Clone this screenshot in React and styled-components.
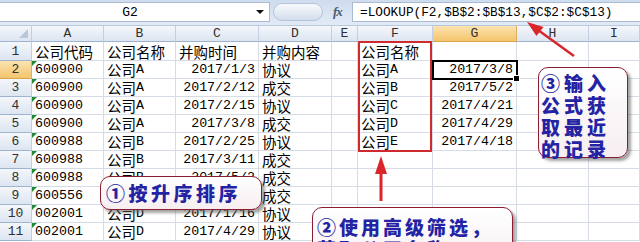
import React from "react";
import styled, { createGlobalStyle } from "styled-components";

const GlobalStyle = createGlobalStyle`
  html, body {
    margin: 0;
    padding: 0;
    background: #ffffff;
    overflow: hidden;
  }
  #root {
    width: 640px;
    height: 242px;
  }
`;

const COLS = [32, 72, 72, 83, 73, 26, 75, 84, 72, 51];
const LETTERS = ["", "A", "B", "C", "D", "E", "F", "G", "H", "I"];
const ALIGN = ["c", "l", "l", "r", "l", "l", "l", "r", "l", "l"];

const ROWS = [
  ["公司代码", "公司名称", "并购时间", "并购内容", "", "公司名称", "", "", ""],
  ["600900", "公司A", "2017/1/3", "协议", "", "公司A", "2017/3/8", "", ""],
  ["600900", "公司A", "2017/2/12", "成交", "", "公司B", "2017/5/2", "", ""],
  ["600900", "公司A", "2017/2/15", "协议", "", "公司C", "2017/4/21", "", ""],
  ["600900", "公司A", "2017/3/8", "成交", "", "公司D", "2017/4/29", "", ""],
  ["600988", "公司B", "2017/2/25", "协议", "", "公司E", "2017/4/18", "", ""],
  ["600988", "公司B", "2017/3/11", "成交", "", "", "", "", ""],
  ["600988", "公司B", "2017/5/2", "成交", "", "", "", "", ""],
  ["600556", "公司C", "2017/4/21", "成交", "", "", "", "", ""],
  ["002001", "公司D", "2017/1/16", "协议", "", "", "", "", ""],
  ["002001", "公司D", "2017/4/29", "协议", "", "", "", "", ""],
];

const Sheet = styled.div`
  position: relative;
  width: 640px;
  height: 242px;
  overflow: hidden;
  font-family: "Liberation Mono", "Noto Sans CJK SC", monospace;
  color: #000;
`;

const FormulaBar = styled.div`
  display: flex;
  height: 26px;
  box-sizing: border-box;
  padding: 2px 0 3px 0;
  background: linear-gradient(#cfdcee, #e2eaf6);
  border-bottom: 1px solid #b7c7dc;
`;

const NameBox = styled.div`
  flex: 0 0 270px;
  display: flex;
  align-items: center;
  background: #fff;
  border: 1px solid #a9bcd4;
  border-left: none;
  box-sizing: border-box;
  font-size: 13px;
`;

const NameText = styled.span`
  flex: 1;
  text-align: center;
  padding-left: 4px;
`;

const Caret = styled.span`
  width: 0;
  height: 0;
  margin-right: 5px;
  border-left: 4px solid transparent;
  border-right: 4px solid transparent;
  border-top: 4px solid #111;
`;

const ToolZone = styled.div`
  flex: 0 0 82px;
  display: flex;
  align-items: center;
  padding-left: 3px;
  box-sizing: border-box;
`;

const Pill = styled.div`
  width: 50px;
  height: 18px;
  border-radius: 9px;
  background: linear-gradient(#f7f9fc, #d3deeb);
  border: 1px solid #b4c4d9;
  box-sizing: border-box;
`;

const Fx = styled.span`
  margin-left: 10px;
  font-family: "Liberation Serif", serif;
  font-style: italic;
  font-weight: bold;
  font-size: 13px;
  color: #4a5a70;
  letter-spacing: -1px;
`;

const FormulaInput = styled.div`
  flex: 1;
  display: flex;
  align-items: center;
  padding-left: 7px;
  background: #fff;
  border: 1px solid #a9bcd4;
  border-right: none;
  font-size: 12.75px;
  white-space: nowrap;
`;

const Grid = styled.div`
  display: grid;
  grid-template-columns: ${COLS.map((w) => w + "px").join(" ")};
  grid-template-rows: 16px 19px repeat(10, 18px);
`;

const Head = styled.div`
  position: relative;
  display: flex;
  align-items: center;
  justify-content: center;
  box-sizing: border-box;
  font-size: 13px;
  color: #303030;
  background: ${(p) =>
    p.$active
      ? "linear-gradient(#fbe3b0, #f4c56c)"
      : "linear-gradient(#f4f7fb, #dce5f1)"};
  border-right: 1px solid ${(p) => (p.$active ? "#dcae5e" : "#c3cfe0")};
  border-bottom: 1px solid ${(p) => (p.$active ? "#d9a24b" : "#9eb3cd")};
`;

const Corner = styled(Head)`
  &::after {
    content: "";
    position: absolute;
    right: 3px;
    bottom: 3px;
    border-left: 9px solid transparent;
    border-bottom: 9px solid #b9c6d7;
  }
`;

const Cell = styled.div`
  position: relative;
  display: flex;
  align-items: flex-end;
  justify-content: ${(p) => (p.$align === "r" ? "flex-end" : "flex-start")};
  padding: 0 ${(p) => (p.$align === "r" ? "3px" : "0")} 0 ${(p) => (p.$align === "l" ? "3px" : "0")};
  box-sizing: border-box;
  border-right: 1px solid #d6dce6;
  border-bottom: 1px solid #d6dce6;
  font-size: 13.3px;
  line-height: 17px;
  white-space: nowrap;

  ${(p) =>
    p.$flag &&
    `
    &::before {
      content: "";
      position: absolute;
      left: 0;
      top: 0;
      border-top: 5px solid #1f8a35;
      border-right: 5px solid transparent;
    }
  `}

  ${(p) =>
    p.$sel &&
    `
    outline: 2px solid #000;
    outline-offset: -1px;
    z-index: 2;
    &::after {
      content: "";
      position: absolute;
      right: -4px;
      bottom: -4px;
      width: 5px;
      height: 5px;
      background: #000;
      border: 1px solid #fff;
    }
  `}
`;

const Han = styled.span`
  font-family: "Noto Sans CJK SC", sans-serif;
  font-size: 14.5px;
  line-height: 17px;
`;

const RedFrame = styled.div`
  position: absolute;
  left: 358px;
  top: 41px;
  width: 74px;
  height: 111px;
  box-sizing: border-box;
  border: 2px solid #cf2a2d;
  z-index: 3;
`;

const Callout = styled.div`
  position: absolute;
  left: ${(p) => p.$x}px;
  top: ${(p) => p.$y}px;
  width: ${(p) => p.$w}px;
  height: ${(p) => p.$h}px;
  box-sizing: border-box;
  padding: ${(p) => p.$pad};
  border: 1.5px solid #8c1c30;
  border-radius: 10px;
  background: linear-gradient(#ffffff, #f6eef1);
  box-shadow: 3px 3px 3px rgba(90, 90, 90, 0.55);
  font-family: "Noto Sans CJK SC", sans-serif;
  font-weight: 900;
  font-size: 19px;
  line-height: 22px;
  letter-spacing: ${(p) => p.$ls}px;
  color: #2323a3;
  z-index: 4;
`;

const Arrows = styled.svg`
  position: absolute;
  left: 0;
  top: 0;
  pointer-events: none;
  z-index: 5;
`;

function mixed(text) {
  const parts = text.split(/([\u3000-\u9fff\uff00-\uffef]+)/).filter(Boolean);
  return parts.map((s, i) =>
    /[\u3000-\u9fff\uff00-\uffef]/.test(s) ? <Han key={i}>{s}</Han> : <span key={i}>{s}</span>
  );
}

export default function App() {
  return (
    <>
      <GlobalStyle />
      <Sheet>
        <FormulaBar>
          <NameBox>
            <NameText>G2</NameText>
            <Caret />
          </NameBox>
          <ToolZone>
            <Pill />
            <Fx>fx</Fx>
          </ToolZone>
          <FormulaInput>=LOOKUP(F2,$B$2:$B$13,$C$2:$C$13)</FormulaInput>
        </FormulaBar>

        <Grid>
          {LETTERS.map((l, i) =>
            i === 0 ? <Corner key="corner" /> : <Head key={l} $active={l === "G"}>{l}</Head>
          )}
          {ROWS.map((row, r) => (
            <React.Fragment key={r}>
              <Head $active={r === 1}>{r + 1}</Head>
              {row.map((v, c) => (
                <Cell
                  key={c}
                  $align={r === 0 ? "l" : ALIGN[c + 1]}
                  $flag={c === 0 && r > 0}
                  $sel={r === 1 && c === 6}
                >
                  {mixed(v)}
                </Cell>
              ))}
            </React.Fragment>
          ))}
        </Grid>

        <RedFrame />

        <Callout $x={100} $y={176} $w={162} $h={34} $pad="5px 0 0 5px" $ls={3.5}>
          ①按升序排序
        </Callout>
        <Callout $x={312} $y={207} $w={201} $h={64} $pad="8px 0 0 4px" $ls={3}>
          ②使用高级筛选，
          <br />
          获取公司名称
        </Callout>
        <Callout $x={538} $y={67} $w={90} $h={91} $pad="4px 0 0 2px" $ls={4}>
          ③输入
          <br />
          公式获
          <br />
          取最近
          <br />
          的记录
        </Callout>

        <Arrows width="640" height="242" viewBox="0 0 640 242">
          <line x1="574" y1="56" x2="538" y2="30" stroke="#d8262b" strokeWidth="2.5" />
          <polygon points="527,22 543.5,27 536.5,36" fill="#d8262b" />
          <line x1="381" y1="201" x2="381" y2="170" stroke="#d8262b" strokeWidth="3" />
          <polygon points="381,156 375,174 387,174" fill="#d8262b" />
        </Arrows>
      </Sheet>
    </>
  );
}
